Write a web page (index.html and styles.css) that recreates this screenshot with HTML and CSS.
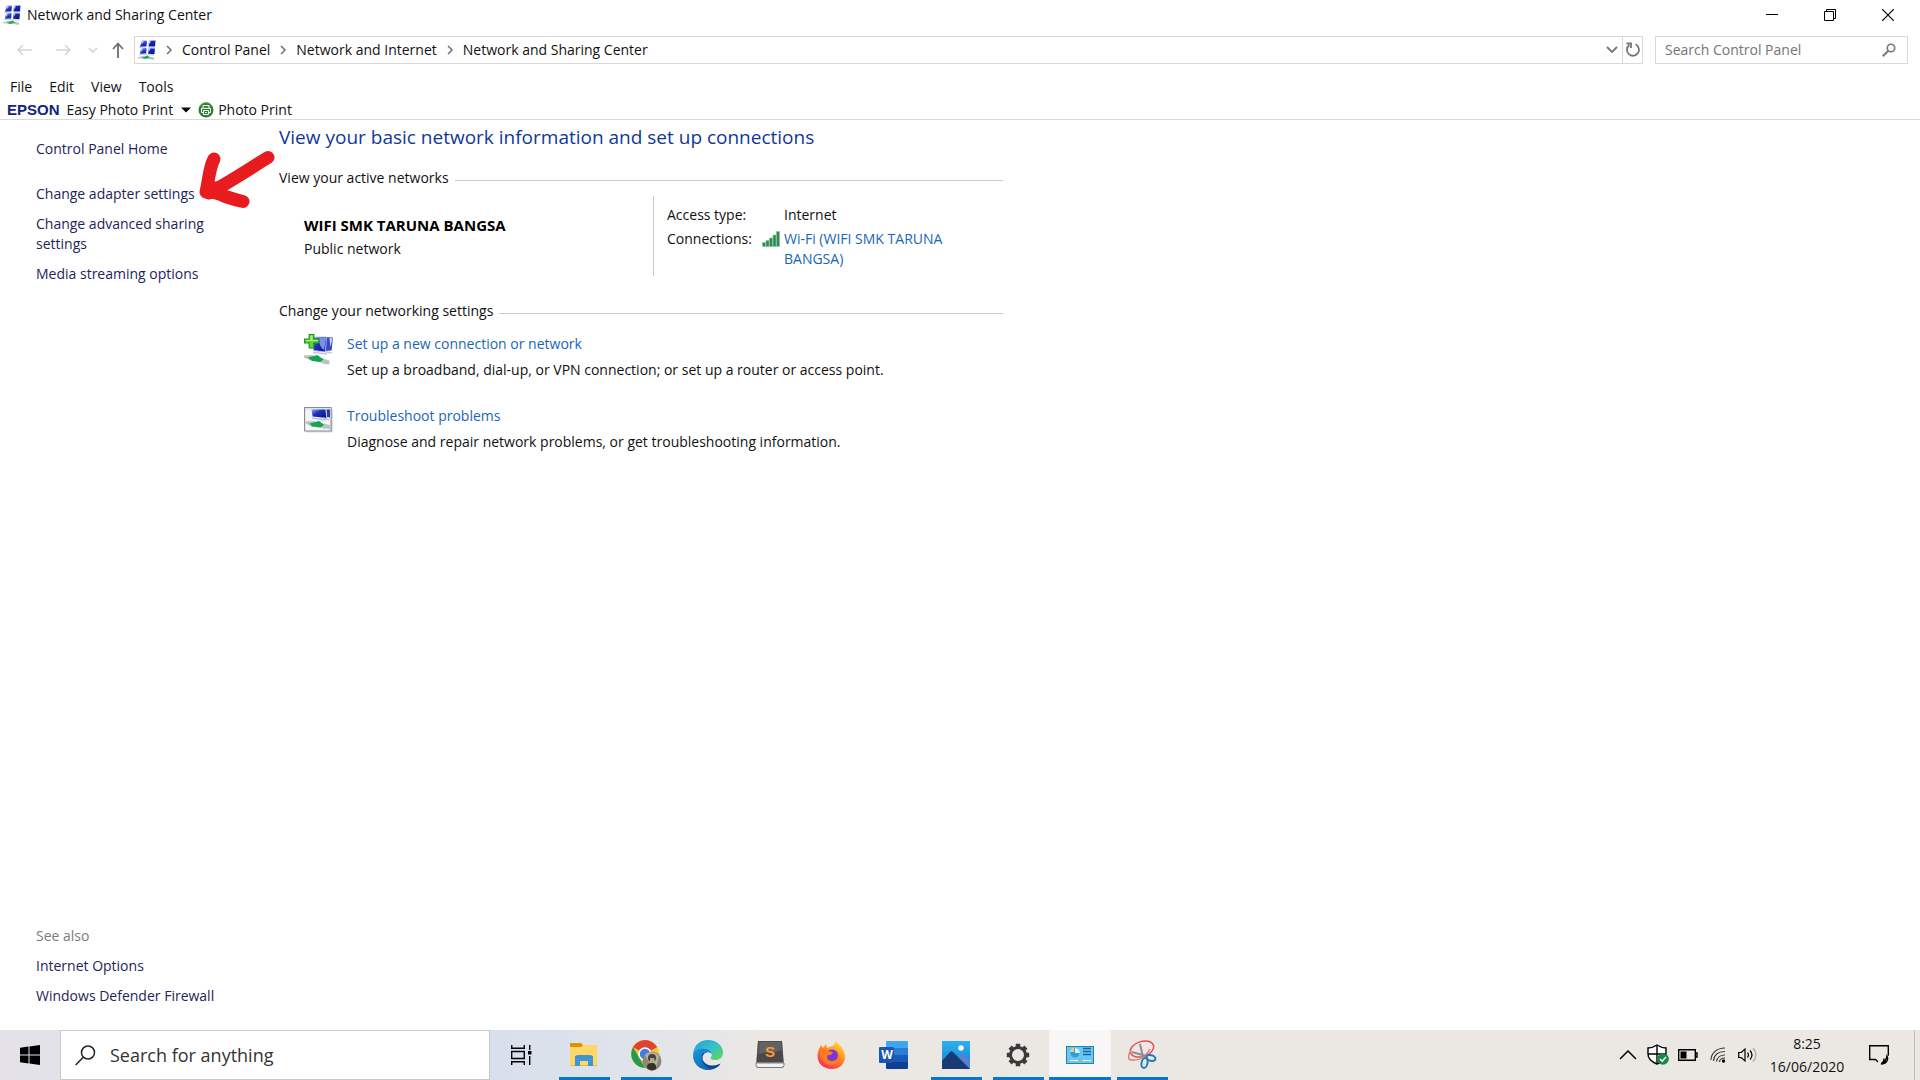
FILE: index.html
```html
<!DOCTYPE html>
<html lang="en">
<head>
    <meta charset="UTF-8">
    <meta name="viewport" content="width=device-width, initial-scale=1.0">
    <title>Network and Sharing Center</title>
    <link rel="stylesheet" href="styles.css">
</head>
<body>
    <!-- Shared icons -->
    <svg class="sprite" aria-hidden="true">
        <defs>
            <linearGradient id="screen" x1="0" y1="0" x2="1" y2="1">
                <stop offset="0" stop-color="#8fa8f0"/>
                <stop offset="0.4" stop-color="#1c2fc0"/>
                <stop offset="1" stop-color="#06108a"/>
            </linearGradient>
            <linearGradient id="edge-blue" x1="0" y1="0" x2="1" y2="1">
                <stop offset="0" stop-color="#1b9de2"/>
                <stop offset="1" stop-color="#0c4f9c"/>
            </linearGradient>
            <linearGradient id="edge-green" x1="0" y1="0" x2="1" y2="1">
                <stop offset="0" stop-color="#1f9fe0"/>
                <stop offset="0.5" stop-color="#35c1c9"/>
                <stop offset="1" stop-color="#62d84f"/>
            </linearGradient>
            <linearGradient id="fox" x1="0.8" y1="0" x2="0.2" y2="1">
                <stop offset="0" stop-color="#ffe03a"/>
                <stop offset="0.45" stop-color="#ff8a1e"/>
                <stop offset="1" stop-color="#f5245a"/>
            </linearGradient>
            <linearGradient id="sky" x1="0" y1="0" x2="0" y2="1">
                <stop offset="0" stop-color="#2cb1ec"/>
                <stop offset="1" stop-color="#1480d0"/>
            </linearGradient>
        </defs>
        <symbol id="icon-network" viewBox="0 0 18 20">
            <path d="M4 .5l5 .3-.6 5.700-6.400.3zM11 .8l6.500-.3-.5 6-6.500.1z" fill="url(#screen)"/>
            <path d="M3 8.500l5.500-.5-.3 5.500-6.200.3zM10.800 8.200l6.200.2-.6 5.900-6.300-.5z" fill="url(#screen)"/>
            <path d="M4 .5l2 .2-2.500 4zM11 .8l2-.1-2 4zM3 8.500l2-.1-2 3.500zM10.800 8.200l2 .1-2 3.500z" fill="#c3d0f8"/>
            <path d="M1 7l7.500-.3v.8L1 7.800zM10 7h7v.8h-7zM1 14.100l15 .5v.9L1 15.100z" fill="#c3c8da"/>
            <path d="M0 17.200l5-1.200 11 1.500v2.300l-3-.3-4-1-9-.3z" fill="#b9c3bd"/>
            <path d="M3.500 18l6-2.500 2.500 2-4.500 1.500z" fill="#18b055"/>
        </symbol>
        <symbol id="icon-next" viewBox="0 0 8 10">
            <path d="M2 1l4 4-4 4" fill="none" stroke="#707070" stroke-width="1.500"/>
        </symbol>
    </svg>

    <header class="titlebar">
        <svg class="net-icon"><use href="#icon-network"/></svg>
        <span class="window-title">Network and Sharing Center</span>
        <div class="window-controls">
            <button aria-label="Minimize"><svg width="12" height="12" viewBox="0 0 12 12"><path d="M0 5.500h12" stroke="#000"/></svg></button>
            <button aria-label="Restore"><svg width="12" height="12" viewBox="0 0 12 12"><path d="M.5 2.500h9v9h-9zM2.500 2.500v-2h9v9h-2" fill="none" stroke="#000"/></svg></button>
            <button aria-label="Close"><svg width="12" height="12" viewBox="0 0 12 12"><path d="M0 0l12 12M12 0L0 12" stroke="#000" stroke-width="1.200"/></svg></button>
        </div>
    </header>

    <div class="navbar">
        <div class="nav-buttons">
            <button aria-label="Back"><svg width="16" height="14" viewBox="0 0 16 14"><path d="M15 7H1M6 2L1 7l5 5" fill="none" stroke="#d6d6d6" stroke-width="1.500"/></svg></button>
            <button aria-label="Forward"><svg width="16" height="14" viewBox="0 0 16 14"><path d="M1 7h14M10 2l5 5-5 5" fill="none" stroke="#d6d6d6" stroke-width="1.500"/></svg></button>
            <button class="recent" aria-label="Recent locations"><svg width="10" height="6" viewBox="0 0 10 6"><path d="M1 1l4 4 4-4" fill="none" stroke="#d0d0d0" stroke-width="1.500"/></svg></button>
            <button class="up" aria-label="Up"><svg width="14" height="16" viewBox="0 0 14 16"><path d="M7 16V2M2 7l5-5.500L12 7" fill="none" stroke="#6e6e6e" stroke-width="1.800"/></svg></button>
        </div>
        <nav class="address" aria-label="Address">
            <svg class="net-icon"><use href="#icon-network"/></svg>
            <svg class="next"><use href="#icon-next"/></svg>
            <a href="#">Control Panel</a>
            <svg class="next"><use href="#icon-next"/></svg>
            <a href="#">Network and Internet</a>
            <svg class="next"><use href="#icon-next"/></svg>
            <a href="#">Network and Sharing Center</a>
            <button class="history" aria-label="Previous locations"><svg width="12" height="8" viewBox="0 0 12 8"><path d="M1 1l5 5 5-5" fill="none" stroke="#777" stroke-width="1.800"/></svg></button>
            <button class="refresh" aria-label="Refresh"><svg width="16" height="16" viewBox="0 0 16 16"><path d="M10.500 2.300a6 6 0 1 1-6.200.7M1.500 1.500h4.500v4.500" fill="none" stroke="#777" stroke-width="1.800"/></svg></button>
        </nav>
        <div class="search">
            <input type="text" placeholder="Search Control Panel" aria-label="Search Control Panel">
            <svg width="14" height="14" viewBox="0 0 14 14"><circle cx="9" cy="5" r="3.700" fill="none" stroke="#777" stroke-width="1.600"/><path d="M6.500 7.500L.8 13.200" stroke="#777" stroke-width="2"/></svg>
        </div>
    </div>

    <div class="menubar">
        <button>File</button>
        <button>Edit</button>
        <button>View</button>
        <button>Tools</button>
    </div>

    <div class="toolbar">
        <span class="brand">EPSON</span>
        <button class="easy-print">Easy Photo Print
            <svg width="10" height="6" viewBox="0 0 10 6"><path d="M0 .5h10L5 5.500z" fill="#000"/></svg>
        </button>
        <button class="photo-print">
            <svg width="16" height="16" viewBox="0 0 16 16"><circle cx="8" cy="8" r="7.500" fill="#2e7d32"/><path d="M1.500 5a7 7 0 0 1 13 0" fill="none" stroke="#79b06f"/><path d="M5 6V3.500h6V6M3.500 10.500V6.300h9v4.200h-2M5.500 8.500h5v4h-5zM5.500 10.500h-2M7 10.500h2" fill="none" stroke="#fff"/></svg>
            Photo Print
        </button>
    </div>

    <div class="page">
        <aside class="sidebar">
            <ul class="tasks">
                <li class="home"><a href="#">Control Panel Home</a></li>
                <li class="marked">
                    <a href="#">Change adapter settings</a>
                    <svg class="arrow" width="76" height="60" viewBox="0 0 76 60"><g fill="none" stroke="#e81c1e" stroke-linecap="round" stroke-linejoin="round"><path d="M69 7.500C53 17 36 29 10 43" stroke-width="13"/><path d="M15 9C10 18 10 30 7 42c8 0 12 1 18 4 6 2 12 4 19 5.500" stroke-width="13"/><path d="M11 38l10 1" stroke-width="14"/></g></svg>
                </li>
                <li><a href="#">Change advanced sharing settings</a></li>
                <li><a href="#">Media streaming options</a></li>
            </ul>
            <ul class="see-also">
                <li class="label">See also</li>
                <li><a href="#">Internet Options</a></li>
                <li><a href="#">Windows Defender Firewall</a></li>
            </ul>
        </aside>

        <main class="content">
            <h1>View your basic network information and set up connections</h1>

            <h2>View your active networks</h2>
            <div class="network">
                <div class="network-name">
                    <strong>WIFI SMK TARUNA BANGSA</strong>
                    <span>Public network</span>
                </div>
                <dl class="network-info">
                    <dt>Access type:</dt>
                    <dd>Internet</dd>
                    <dt>Connections:
                        <svg width="18" height="16" viewBox="0 0 18 16"><g fill="#2f8a52" stroke="#8fc3a0" stroke-width=".6"><path d="M.5 11.500h3v4h-3z"/><path d="M4 9.500h3v6H4z"/><path d="M7.500 7h3v8.500h-3z"/><path d="M11 4h3v11.500h-3z"/><path d="M14.500.5h3v15h-3z"/></g></svg>
                    </dt>
                    <dd><a href="#">Wi-Fi (WIFI SMK TARUNA BANGSA)</a></dd>
                </dl>
            </div>

            <h2>Change your networking settings</h2>
            <ul class="settings">
                <li>
                    <svg width="30" height="32" viewBox="0 0 26 32" preserveAspectRatio="none">
                        <path d="M17 3l8 .5-1 13-7 .5z" fill="#3448c8"/>
                        <path d="M22 4l2.500.2-1.500 9z" fill="#d4dcfa"/>
                        <path d="M8 3h11.500l-1 15L8 16.500z" fill="url(#screen)" stroke="#b9c3ea" stroke-width=".8"/>
                        <path d="M13 4h6l-1.500 12c-3-2-4.500-6-4.500-12z" fill="#7890e6"/>
                        <path d="M8 18.500l12 1.500M18 17.500l6 1.500" stroke="#c4c8d2" stroke-width="1.500"/>
                        <path d="M0 21.500l6-.5 16 5.500v4l-5-.5-4-2.500-7-1-6-3z" fill="#b9c6bd"/>
                        <path d="M3.500 23.500l8-2.500 5.500 4.500-3 2.500-7-1z" fill="#16a352"/>
                        <path d="M4.500 .5h4v4.500H13v4H8.500v5h-4v-5H.5V5h4z" fill="#5ed43a" stroke="#258c16"/>
                        <path d="M5.500 1.500h2V6H12v1H1.500V6h4z" fill="#a5f07f"/>
                    </svg>
                    <div>
                        <a href="#">Set up a new connection or network</a>
                        <p>Set up a broadband, dial-up, or VPN connection; or set up a router or access point.</p>
                    </div>
                </li>
                <li>
                    <svg width="30" height="32" viewBox="0 0 26 32" preserveAspectRatio="none">
                        <path d="M2 3h23v23.500H2z" fill="#d9d9d9"/>
                        <path d="M.5 1.500h23v23.500H.5z" fill="#f4f5f8" stroke="#8b8d96"/>
                        <path d="M1 2h22v2H1z" fill="#dfe3ec"/>
                        <path d="M6.500 3.500h12l1 8.500-12-1.500z" fill="url(#screen)"/>
                        <path d="M19.500 3.500h3v8l-2.500-.5z" fill="#2438b0"/>
                        <path d="M7 12l12 2M17 12l5 2" stroke="#bcc3cd" stroke-width="1.500"/>
                        <path d="M1.500 15.500l6-.5 15 4v4l-6-.5-4-1.500-6-.5-5-3z" fill="#b9c6bd"/>
                        <path d="M5 17.500l8-2.500 4.500 4-3.500 2.500-7-1z" fill="#16a352"/>
                    </svg>
                    <div>
                        <a href="#">Troubleshoot problems</a>
                        <p>Diagnose and repair network problems, or get troubleshooting information.</p>
                    </div>
                </li>
            </ul>
        </main>
    </div>

    <footer class="taskbar">
        <button class="start" aria-label="Start"><svg width="20" height="20" viewBox="0 0 20 20"><path d="M0 2.800l8.500-1.200V9.500H0zM9.500 1.400L20 0v9.500H9.500zM0 10.500h8.500v8L0 17.300zM9.500 10.500H20V20L9.500 18.600z" fill="#000"/></svg></button>
        <div class="taskbar-search">
            <svg width="21" height="21" viewBox="0 0 21 21"><circle cx="13" cy="7.500" r="6.500" fill="none" stroke="#222" stroke-width="1.500"/><path d="M8.300 12.200L.7 20" stroke="#222" stroke-width="1.500"/></svg>
            <input type="text" placeholder="Search for anything" aria-label="Search for anything">
        </div>
        <button class="task-view" aria-label="Task View"><svg width="21" height="20" viewBox="0 0 21 20"><path d="M.7 0v3.300h12.600V0M.7 20v-3.300h12.600V20M.7 6.500h12.600v7H.7zM18.700 0v5M18.700 11v9" fill="none" stroke="#000" stroke-width="1.400"/><path d="M17 6h3.500v3.500H17z"/></svg></button>

        <div class="apps">
            <button class="open" aria-label="File Explorer">
                <svg width="30" height="30" viewBox="0 0 30 30"><path d="M1 3h11l2 3h14v20H1z" fill="#f5bf3c"/><path d="M1 3h11l2 2-2 2H1z" fill="#d9940c"/><path d="M1 7h12l2-2h13v20H1z" fill="#ffd766"/><path d="M6 26V16.500L8 15h14l2 1.500V26h-5v-5h-8v5z" fill="#3f94d4"/></svg>
            </button>
            <button class="open" aria-label="Google Chrome">
                <svg width="32" height="32" viewBox="0 0 32 32"><circle cx="15" cy="15" r="14" fill="#fbc72b"/><path d="M15 15L3 8A14 14 0 0 1 27.200 8z" fill="#dc4335"/><path d="M3 8l7 12 5 8.900A14 14 0 0 1 3 8z" fill="#269b50"/><circle cx="15" cy="15" r="6.800" fill="#fff"/><circle cx="15" cy="15" r="5.200" fill="#3f7de8"/><circle cx="22" cy="22" r="9.500" fill="#8b8877"/><path d="M15 16c3-4 11-4 14 1l-3 12-3 2z" fill="#b2b0a4"/><circle cx="22" cy="19" r="4" fill="#494237"/><path d="M20 19h4l1 4-3 2-2-2z" fill="#bba68a"/><path d="M17 29c0-5 3-5 5-5s5 1 4 6c-3 2-6 2-9-1z" fill="#353027"/></svg>
            </button>
            <button aria-label="Microsoft Edge">
                <svg width="30" height="30" viewBox="0 0 30 30"><path d="M0 14C1 5 7 0 15 0c9 0 15 6 15 12.500 0 5-3.500 7.500-7.500 7.500-3 0-5-1-5-2 0-.8 1.500-1.500 1.500-4C19 11 15 8.500 10 8.500 5 8.500 1.500 10.500 0 14z" fill="url(#edge-green)"/><path d="M0 15.500C0 10.500 5 8 10 8.300c5.500.3 9 3 9 6.200-1-1.500-3-2.500-5-2-4 1-6 5.500-3.500 9.500 3 4.500 10 5.500 17 1.500C25 27.500 20.500 30 15 30 6.500 30 0 23.500 0 15.500z" fill="url(#edge-blue)"/><path d="M10 13c-4 7 2 16 10.500 15.500 3-.5 5.500-2.500 7-5-5 3-13 3-16.500-1.500C8.500 19 9 15.500 11 13.500z" fill="#0d4592"/></svg>
            </button>
            <button aria-label="Sublime Text">
                <svg width="30" height="30" viewBox="0 0 30 30"><path d="M3 1h24l2 23v3l-2 1H3l-2-1v-3z" fill="#8d8d8d"/><path d="M1 23h28v3l-2 1.500H3L1 26z" fill="#f2f2f2" stroke="#686868" stroke-width=".8"/><path d="M3 1h24l1.500 21h-27z" fill="#4a4a4a"/><path d="M4 2h22l.7 8C19 14 11 11 3.300 14z" fill="#626262"/><text class="sublime-letter" x="15" y="17" text-anchor="middle">S</text></svg>
            </button>
            <button aria-label="Firefox">
                <svg width="30" height="30" viewBox="0 0 30 30"><path d="M2 9l2-4 2 3 3-4 1 4 7-3 2-4c2 3 4 4 6 7 6 8 3 21-10 21C2 29-2 18 2 9z" fill="url(#fox)"/><circle cx="15" cy="16" r="6.500" fill="#7a35da"/><path d="M3 9c4-1 6 0 8 2l5 1c-1 3-3 3-5 3-2 3 0 6 4 6 5 0 7-4 5-9 5 5 3 12-4 13C7 26 2 18 3 9z" fill="#ff7a20"/></svg>
            </button>
            <button aria-label="Word">
                <svg width="30" height="30" viewBox="0 0 30 30"><path d="M8 1h20a1 1 0 0 1 1 1v6H7V2a1 1 0 0 1 1-1z" fill="#41a5ee"/><path d="M7 8h22v7H7z" fill="#2b7cd3"/><path d="M7 15h22v7H7z" fill="#185abd"/><path d="M7 22h22v6a1 1 0 0 1-1 1H8a1 1 0 0 1-1-1z" fill="#103f91"/><rect x="0" y="7" width="15" height="16" rx="1" fill="#1b56b3"/><text class="word-letter" x="8" y="19" text-anchor="middle">W</text></svg>
            </button>
            <button class="open" aria-label="Photos">
                <svg width="30" height="30" viewBox="0 0 30 30"><path d="M1 1h28v28H1z" fill="url(#sky)"/><circle cx="20" cy="8" r="2.700" fill="#fff"/><path d="M12 24l9-10q1-1 2 0l6 7v8H14z" fill="#5a80d4"/><path d="M1 21l8-9q1.500-1.500 3 0l17 17H1z" fill="#183b73"/></svg>
            </button>
            <button class="open" aria-label="Settings">
                <svg width="24" height="24" viewBox="0 0 24 24"><circle cx="12" cy="12" r="7.500" fill="none" stroke="#3b3a39" stroke-width="3"/><g stroke="#3b3a39" stroke-width="4.500"><path d="M12 .8v3.500M12 19.700v3.500M.8 12h3.500M19.700 12h3.500"/><path d="M4.100 4.100l2.500 2.500M17.400 17.400l2.500 2.500M4.100 19.900l2.500-2.500M17.400 6.600l2.500-2.500"/></g></svg>
            </button>
            <button class="open active" aria-label="Control Panel">
                <svg width="28" height="20" viewBox="0 0 28 20"><rect x=".5" y="1.500" width="27" height="17" fill="#68c8f2" stroke="#2483b5"/><circle cx="9" cy="8" r="4.800" fill="#d9f3fe"/><path d="M9 8V3.200A4.800 4.800 0 1 0 13.800 8z" fill="#2f9edc"/><path d="M8 7V3a4.300 4.300 0 0 0-4 4z" fill="#f4ce6b"/><path d="M17 3.500h8M17 6.500h8M17 9.500h8" stroke="#18699b" stroke-width="1.500"/><path d="M4 15.500h8M17 15.500h8" stroke="#fff" stroke-width="1.200"/><path d="M12 14.500h2v2h-2z" fill="#e8a33c"/></svg>
            </button>
            <button class="open" aria-label="Snipping Tool">
                <svg width="30" height="30" viewBox="0 0 30 30"><ellipse cx="15" cy="9" rx="12" ry="7.500" transform="rotate(-18 15 9)" fill="#f3e5e5" stroke="#dc5454" stroke-width="1.500"/><path d="M4 10c-3 5-4 10 1 10 8 1 14-4 18-11" fill="none" stroke="#e57272" stroke-width="1.300"/><path d="M13 4l3 13M5 12l14 4" stroke="#8e8e8e" stroke-width="2"/><ellipse cx="17.500" cy="23" rx="3" ry="5" transform="rotate(12 17.500 23)" fill="none" stroke="#2479b8" stroke-width="2"/><ellipse cx="24" cy="18" rx="4.500" ry="2.800" transform="rotate(15 24 18)" fill="none" stroke="#2479b8" stroke-width="2"/></svg>
            </button>
        </div>

        <div class="tray">
            <button aria-label="Show hidden icons"><svg width="18" height="12" viewBox="0 0 18 12"><path d="M1 10l8-8 8 8" fill="none" stroke="#000" stroke-width="1.500"/></svg></button>
            <button aria-label="Windows Security"><svg width="22" height="22" viewBox="0 0 22 22"><path d="M10 1c3 2 6 3 9 3v6c0 5-4 8-9 10-5-2-9-5-9-10V4c3 0 6-1 9-3z" fill="#fff" stroke="#000" stroke-width="1.400"/><path d="M10 1v19M1 10h18" stroke="#000" stroke-width="1.400"/><circle cx="16" cy="15" r="5.800" fill="#168a45"/><path d="M13 15l2.200 2.200L19 13" fill="none" stroke="#fff" stroke-width="1.500"/></svg></button>
            <button aria-label="Battery"><svg width="20" height="12" viewBox="0 0 20 12"><path d="M.7.700h16.600v10.600H.7zM17.500 4h1.500v4h-1.500" fill="none" stroke="#000" stroke-width="1.400"/><path d="M2.500 2.500h6v7h-6z"/></svg></button>
            <button aria-label="Wi-Fi"><svg width="16" height="16" viewBox="0 0 16 16"><g fill="none" stroke="#333" stroke-width="1.200"><path d="M1 13C1 6 7 1 15 1M3.500 14C4 8 8 4.500 15 4.500M6.500 14.500C7 11 10 8 15 8M9.500 15c0-2 2-4 5.500-4"/></g><circle cx="13.500" cy="14" r="1.700"/></svg></button>
            <button aria-label="Volume"><svg width="20" height="16" viewBox="0 0 20 16"><path d="M.7 5.500h2.500L7 2v12L3.200 10.500H.7z" fill="none" stroke="#000" stroke-width="1.200"/><path d="M9.500 5.500q2 2.500 0 5M12 3.500q4 4.500 0 9" fill="none" stroke="#000" stroke-width="1.200"/><path d="M15 1q6 7 0 14" fill="none" stroke="#aaa" stroke-width="1.200"/></svg></button>
        </div>
        <button class="clock"><span>8:25</span><span>16/06/2020</span></button>
        <button class="notifications" aria-label="Notifications"><svg width="20" height="20" viewBox="0 0 20 20"><path d="M9 17l-2.500-2.500H.7V.7h18.600v10" fill="none" stroke="#000" stroke-width="1.400"/><path d="M18 11c2 4-1 8-6 8 3-1 5-3 6-8zM12 18.500q3-1 3-5" fill="none" stroke="#000" stroke-width="1.300"/></svg></button>
        <button class="show-desktop" aria-label="Show desktop"></button>
    </footer>
</body>
</html>
```
FILE: styles.css
```css
:root {
    --border: #d9d9d9;
    --rule: #c8c8c8;
    --link: #1a66b5;
    --side-link: #1d2558;
    --heading: #10389a;
    --accent: #0078d7;
}

* {
    box-sizing: border-box;
}

body {
    margin: 0;
    min-height: 100vh;
    display: flex;
    flex-direction: column;
    background: #fff;
    color: #111;
    font-family: "Open Sans", "Noto Sans", sans-serif;
    font-size: 14px;
    line-height: 20px;
}

ul,
dl,
dd,
p {
    margin: 0;
    padding: 0;
    list-style: none;
}

a {
    color: inherit;
    text-decoration: none;
}

a:hover {
    text-decoration: underline;
}

button {
    display: flex;
    align-items: center;
    justify-content: center;
    padding: 0;
    border: none;
    background: none;
    color: inherit;
    font: inherit;
}

input {
    flex: 1;
    min-width: 0;
    padding: 0;
    border: none;
    outline: none;
    background: none;
    font: inherit;
}

svg {
    flex: none;
}

.sprite {
    position: absolute;
    width: 0;
    height: 0;
}

.net-icon {
    width: 18px;
    height: 20px;
}

/* Title bar */
.titlebar {
    display: flex;
    align-items: center;
    gap: 6px;
    height: 29px;
    padding: 0 3px;
}

.window-controls {
    display: flex;
    align-self: stretch;
    margin-left: auto;
}

.window-controls button {
    width: 58px;
}

/* Address bar */
.navbar {
    display: flex;
    height: 28px;
    margin: 7px 12px 9px;
}

.nav-buttons {
    display: flex;
    width: 122px;
}

.nav-buttons button {
    width: 38px;
    padding-right: 12px;
}

.nav-buttons .recent {
    width: 10px;
    padding: 0;
}

.nav-buttons .up {
    width: 36px;
    padding: 0 0 0 4px;
}

.address {
    display: flex;
    flex: 1;
    align-items: center;
    gap: 9px;
    margin-right: 12px;
    padding-left: 3px;
    border: 1px solid var(--border);
}

.next {
    width: 8px;
    height: 10px;
}

.address button {
    align-self: stretch;
    width: 20px;
}

.address .history {
    margin-left: auto;
}

.address .refresh {
    margin-left: -9px;
    border-left: 1px solid var(--border);
}

.search {
    display: flex;
    align-items: center;
    width: 253px;
    padding: 0 11px 0 9px;
    border: 1px solid var(--border);
}

.search input::placeholder {
    color: #757575;
}

/* Menus */
.menubar {
    display: flex;
    gap: 17px;
    padding: 0 10px;
    line-height: 28px;
}

.toolbar {
    display: flex;
    align-items: center;
    gap: 7px;
    padding: 0 7px;
    border-bottom: 1px solid var(--border);
    line-height: 18px;
}

.brand {
    color: #14237c;
    font: bold 15px/18px "Liberation Sans", sans-serif;
}

.easy-print {
    gap: 8px;
}

.photo-print {
    gap: 4px;
}

/* Page */
.page {
    display: flex;
    flex: 1;
}

.sidebar {
    display: flex;
    flex-direction: column;
    justify-content: space-between;
    width: 279px;
    padding: 19px 53px 24px 36px;
    color: var(--side-link);
}

.sidebar li + li {
    margin-top: 10px;
}

.sidebar .home + li {
    margin-top: 25px;
}

.marked {
    position: relative;
}

.arrow {
    position: absolute;
    top: -34px;
    left: 163px;
}

.label {
    color: #7d7d7d;
}

.content {
    flex: 1;
    max-width: 724px;
    padding-top: 4px;
}

h1 {
    margin: 0 0 18px;
    color: var(--heading);
    font-size: 19px;
    font-weight: 400;
    line-height: 26px;
}

h2 {
    display: flex;
    align-items: center;
    gap: 6px;
    margin: 0;
    font-size: 14px;
    font-weight: 400;
}

h2::after {
    content: "";
    flex: 1;
    height: 1px;
    margin-top: 4px;
    background: var(--rule);
}

.network {
    display: grid;
    grid-template-columns: 374px 1fr;
    margin: 8px 0 25px;
}

.network-name {
    display: flex;
    flex-direction: column;
    gap: 4px;
    padding: 19px 0 0 25px;
}

.network-name strong {
    color: #000;
    font-size: 15px;
}

.network-info {
    display: grid;
    grid-template-columns: 113px 1fr;
    row-gap: 4px;
    padding: 9px 40px 7px 13px;
    border-left: 1px solid var(--rule);
}

.network-info dt {
    display: flex;
    align-items: center;
    align-self: start;
    justify-content: space-between;
}

.network-info dd {
    padding-left: 4px;
}

.network-info a,
.settings a {
    color: var(--link);
}

.settings {
    display: flex;
    flex-direction: column;
    gap: 26px;
    padding: 13px 0 0 25px;
}

.settings li {
    display: flex;
    gap: 13px;
}

.settings p {
    margin-top: 6px;
}

/* Taskbar */
.taskbar {
    display: flex;
    height: 50px;
    background: linear-gradient(90deg, #e4e2e8 0, #d7e0ec 500px, #dfe3ea 620px, #ebe8e4 760px, #ebe8e4);
}

.start {
    width: 60px;
}

.taskbar-search {
    display: flex;
    align-items: center;
    gap: 14px;
    width: 430px;
    padding-left: 14px;
    border: 1px solid #c8c8c8;
    background: #fff;
    font-size: 18px;
    line-height: 28px;
}

.taskbar-search input {
    height: 28px;
}

.taskbar-search input::placeholder {
    color: #333;
}

.task-view {
    width: 63px;
}

.apps {
    display: flex;
}

.apps button {
    position: relative;
    width: 62px;
}

.apps .active {
    background: #f8f7f6;
}

.open::after {
    content: "";
    position: absolute;
    right: 5px;
    bottom: 0;
    left: 6px;
    height: 3px;
    background: var(--accent);
}

.active::after {
    right: 0;
    left: 0;
}

.sublime-letter {
    fill: #ff9a2e;
    font: bold 15px "Liberation Sans", sans-serif;
}

.word-letter {
    fill: #fff;
    font: bold 12px "Open Sans", sans-serif;
}

.tray {
    display: flex;
    margin-left: auto;
}

.tray button {
    width: 30px;
}

.clock {
    flex-direction: column;
    gap: 3px;
    width: 88px;
}

.notifications {
    width: 60px;
    padding-right: 4px;
}

.show-desktop {
    width: 6px;
    margin-left: 3px;
    border-left: 1px solid #bdbbb8;
}
```
